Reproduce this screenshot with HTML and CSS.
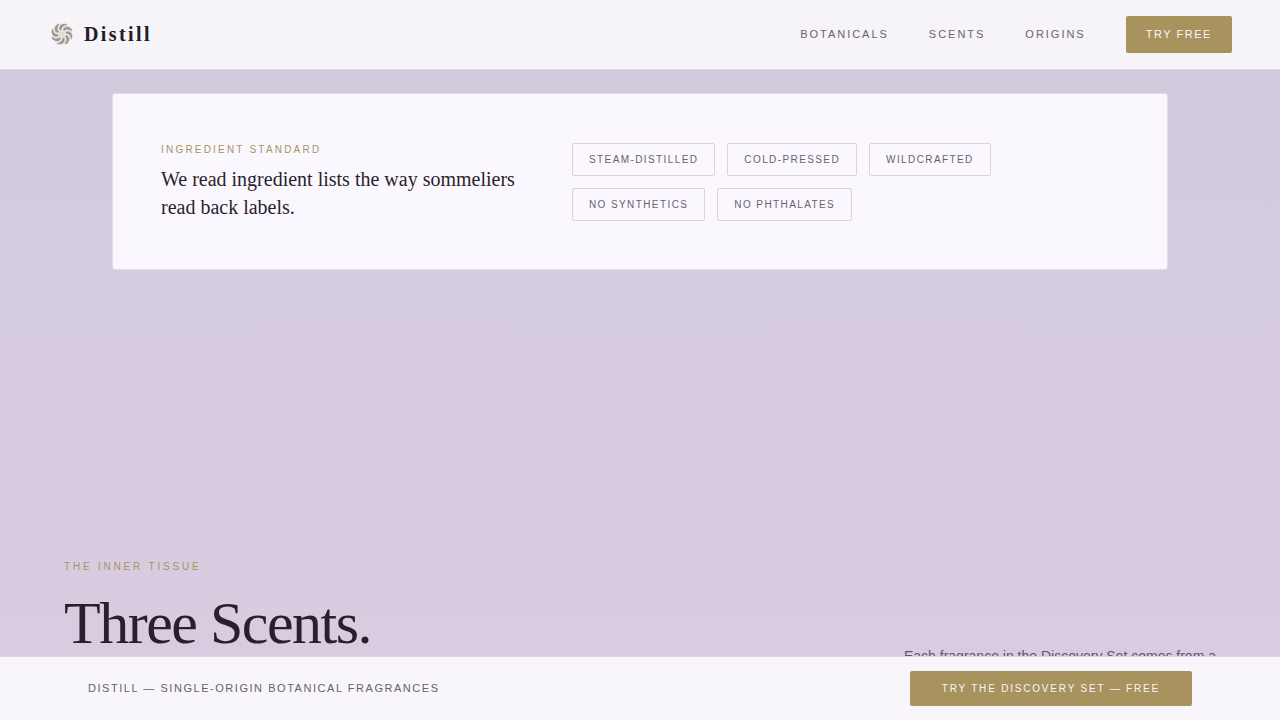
FILE: index.html
```html
<!DOCTYPE html>
<html lang="en">
<head>
<meta charset="utf-8">
<meta name="viewport" content="width=device-width, initial-scale=1">
<title>Distill</title>
<link rel="stylesheet" href="styles.css">
</head>
<body>
<header class="site-header">
  <a class="brand" href="#">
    <svg class="brand-mark" viewBox="-14 -14 28 28" aria-hidden="true">
      <defs>
        <g id="petal">
          <path class="petal-light" d="M-2.500 -3.500C-5 -7 -3 -10 1 -10.500L5 -9C2 -9 -1 -7 -.5 -4Z"/>
          <path class="petal-dark" d="M-2 -3.500C-3.500 -6.500 -2 -9.500 2 -10.300C3.500 -10.500 5 -10 5.500 -9C2 -9 -.3 -7 -.5 -4Z"/>
        </g>
      </defs>
      <use href="#petal"/>
      <use href="#petal" transform="rotate(45)"/>
      <use href="#petal" transform="rotate(90)"/>
      <use href="#petal" transform="rotate(135)"/>
      <use href="#petal" transform="rotate(180)"/>
      <use href="#petal" transform="rotate(225)"/>
      <use href="#petal" transform="rotate(270)"/>
      <use href="#petal" transform="rotate(315)"/>
      <circle class="mark-core" r="3.500"/>
    </svg>
    <span>Distill</span>
  </a>
  <nav class="site-nav">
    <a href="#">BOTANICALS</a>
    <a href="#">SCENTS</a>
    <a href="#">ORIGINS</a>
    <button class="button button-small" type="button">TRY FREE</button>
  </nav>
</header>
<main class="page">
  <section class="standard">
    <div>
      <p class="eyebrow">INGREDIENT STANDARD</p>
      <h2 class="standard-title">We read ingredient lists the way sommeliers read back labels.</h2>
    </div>
    <ul class="tags">
      <li>STEAM-DISTILLED</li>
      <li>COLD-PRESSED</li>
      <li>WILDCRAFTED</li>
      <li>NO SYNTHETICS</li>
      <li>NO PHTHALATES</li>
    </ul>
  </section>
  <section class="scents">
    <div>
      <p class="eyebrow eyebrow-wide">THE INNER TISSUE</p>
      <h1 class="scents-title">Three Scents.</h1>
    </div>
    <p class="scents-copy">Each fragrance in the Discovery Set comes from a</p>
  </section>
</main>
<aside class="sticky-bar">
  <p class="sticky-text">DISTILL — SINGLE-ORIGIN BOTANICAL FRAGRANCES</p>
  <button class="button button-large" type="button">TRY THE DISCOVERY SET — FREE</button>
</aside>
</body>
</html>
```
FILE: styles.css
```css
* { box-sizing: border-box; }
body {
  margin: 0;
  height: 100vh;
  overflow: hidden;
  display: flex;
  flex-direction: column;
  font-family: "Liberation Sans", Arial, sans-serif;
  color: #2a1f2d;
  background: #d5cbde;
}
p, h1, h2, ul { margin: 0; padding: 0; }
.site-header {
  flex: none;
  display: flex;
  align-items: center;
  justify-content: space-between;
  padding: 16px 48px;
  background: #f6f3f9;
  border-bottom: 1px solid #dcd5e0;
}
.brand {
  display: flex;
  align-items: center;
  gap: 8px;
  padding-bottom: 2px;
  color: #221c28;
  font: bold 20px/24px "Liberation Serif", "Times New Roman", serif;
  letter-spacing: 0.12em;
  text-decoration: none;
}
.brand-mark { width: 28px; height: 28px; }
.petal-light { fill: #d8d1cb; }
.petal-dark { fill: #a0988e; }
.mark-core { fill: #e3ddda; }
.site-nav { display: flex; align-items: center; gap: 40px; }
.site-nav a {
  color: #6b6170;
  font-size: 11px;
  line-height: 13px;
  letter-spacing: 0.18em;
  text-decoration: none;
}
.button {
  border: 0;
  border-radius: 2px;
  background: #a8935f;
  color: #f9f5fc;
  font-family: inherit;
  cursor: pointer;
}
.button-small { padding: 12px 20px; font-size: 11px; line-height: 13px; letter-spacing: 0.14em; }
.button-large { padding: 12px 32px; font-size: 10px; line-height: 11px; letter-spacing: 0.18em; }
.page {
  flex: 1;
  min-height: 0;
  padding: 23px 64px 0;
  overflow: hidden;
  background: linear-gradient(#d4cadd, #d8cde0);
}
.standard {
  display: grid;
  grid-template-columns: minmax(0, 363px) 1fr;
  gap: 48px;
  align-items: center;
  max-width: 1056px;
  margin: 0 auto;
  padding: 48px;
  background: #faf8fe;
  border: 1px solid #e3dbe9;
  border-radius: 3px;
}
.eyebrow { color: #a8935f; font-size: 10px; line-height: 15px; letter-spacing: 0.22em; }
.eyebrow-wide { letter-spacing: 0.28em; }
.standard-title {
  margin-top: 8px;
  font: 400 20px/28px "Liberation Serif", "Times New Roman", serif;
}
.tags { display: flex; flex-wrap: wrap; gap: 12px; list-style: none; }
.tags li {
  padding: 10px 16px;
  border: 1px solid #ddd2dc;
  border-radius: 2px;
  color: #6b6070;
  font-size: 10px;
  line-height: 11px;
  letter-spacing: 0.14em;
}
.scents {
  display: flex;
  align-items: flex-end;
  justify-content: space-between;
  gap: 48px;
  margin-top: 289px;
}
.scents-title {
  margin-top: 16px;
  font: 400 60px/66px "Liberation Serif", "Times New Roman", serif;
  letter-spacing: -0.025em;
}
.scents-copy { margin-bottom: -12px; color: #665471; font-size: 14px; line-height: 24px; }
.sticky-bar {
  flex: none;
  display: flex;
  align-items: center;
  justify-content: space-between;
  padding: 14px 88px;
  background: #f8f6fb;
  border-top: 1px solid #ddd6e1;
}
.sticky-text { color: #675f6b; font-size: 11px; line-height: 13px; letter-spacing: 0.14em; }
```
